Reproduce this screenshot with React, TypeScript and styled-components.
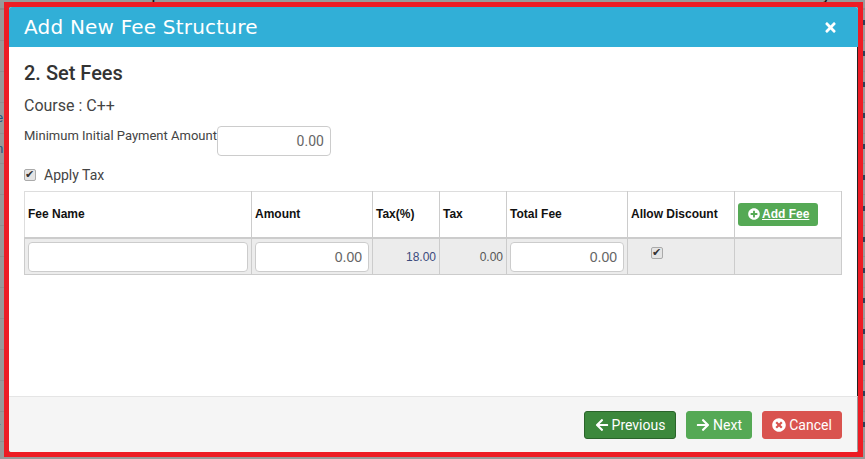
import React from "react";
import styled, { createGlobalStyle } from "styled-components";
import { FaArrowLeft, FaArrowRight, FaPlusCircle, FaTimes, FaTimesCircle } from "react-icons/fa";

const GlobalStyle = createGlobalStyle`
    html, body {
        margin: 0;
        padding: 0;
        width: 865px;
        height: 459px;
        overflow: hidden;
        background: #999;
        font-family: Roboto, "Liberation Sans", sans-serif;
    }
    * {
        box-sizing: border-box;
    }
`;

const Page = styled.div`
    position: relative;
    width: 865px;
    height: 459px;
    overflow: hidden;
`;

// the dimmed page that shows round the modal
const BackHead = styled.div`
    height: 21px;
    margin-top: -11px;
    display: flex;
    font-family: "Liberation Sans", sans-serif;
    font-size: 12px;
    font-weight: 700;
    line-height: 14px;
    color: #111;
    border-bottom: 2px solid #8c8c8c;
`;

const BackLabel = styled.span<{ $left: number }>`
    margin-left: ${(props) => props.$left}px;
`;

const BackRow = styled.div`
    height: 30.9px;
    display: flex;
    align-items: center;
    justify-content: space-between;
    border-bottom: 1px solid #8f8f8f;
    font-family: "Liberation Sans", sans-serif;
    font-size: 13px;
    color: #1f5480;
`;

const BackText = styled.span`
    margin-left: -4px;
`;

const BackMark = styled.span`
    width: 2px;
    height: 5px;
    margin-bottom: 4px;
    background: #2d4258;
`;

const Frame = styled.div`
    position: absolute;
    top: 2px;
    left: 4px;
    width: 859px;
    height: 455px;
    border: 5px solid #ed1c24;
    background: #777;
`;

const Modal = styled.div`
    height: 100%;
    display: flex;
    flex-direction: column;
    background: #fff;
    border-radius: 3px;
    overflow: hidden;
`;

const Header = styled.div`
    height: 40px;
    flex: none;
    background: #31afd7;
    display: flex;
    align-items: center;
    justify-content: space-between;
    padding: 0 20px 0 15px;
    color: #fff;
`;

const HeaderTitle = styled.h4`
    margin: 0;
    font-family: "DejaVu Sans", sans-serif;
    font-size: 20px;
    font-weight: 400;
    letter-spacing: 0.2px;
`;

const Close = styled.span`
    display: flex;
    color: #fff;
    font-size: 15px;
`;

const Body = styled.div`
    flex: 1;
    padding: 14px 15px 0;
    color: #444;
    border-right: 1px solid #222;
`;

const StepTitle = styled.h3`
    margin: 0;
    font-size: 20px;
    font-weight: 500;
    line-height: 24px;
    color: #333;
`;

const Course = styled.div`
    margin-top: 11px;
    font-size: 16px;
    line-height: 20px;
`;

const MinRow = styled.div`
    display: flex;
    align-items: flex-start;
    margin-top: 10px;
    font-size: 13px;
    line-height: 20px;
`;

const MoneyInput = styled.input<{ $width: number }>`
    width: ${(props) => props.$width}px;
    height: 30px;
    padding: 0 6px;
    border: 1px solid #ccc;
    border-radius: 4px;
    background: #fff;
    text-align: right;
    color: #666;
    font-family: Roboto, sans-serif;
    font-size: 14px;
    outline: none;
`;

const TaxRow = styled.label`
    display: flex;
    align-items: center;
    gap: 8px;
    margin-top: 9px;
    font-size: 14px;
    line-height: 20px;
`;

const Check = styled.input`
    appearance: none;
    position: relative;
    width: 12px;
    height: 12px;
    margin: 0;
    border: 1px solid #aaa;
    border-radius: 2px;
    background: #e4e4e4;

    &::after {
        content: "✔";
        position: absolute;
        top: -1px;
        left: 0;
        font-family: "DejaVu Sans", sans-serif;
        font-size: 11px;
        line-height: 12px;
        color: #333;
    }
`;

const Table = styled.table`
    width: 818px;
    margin-top: 6px;
    border-collapse: collapse;
    table-layout: fixed;
    font-family: "Liberation Sans", Arial, sans-serif;
`;

const HeadCell = styled.th<{ $width: number }>`
    width: ${(props) => props.$width}px;
    height: 46px;
    padding: 0 3px;
    border: 1px solid #ddd;
    border-right-color: #ccc;
    border-bottom: 2px solid #ccc;
    text-align: left;
    font-size: 12px;
    font-weight: 700;
    color: #111;
`;

const Cell = styled.td<{ $color?: string }>`
    height: 37px;
    padding: 2px 3px 0;
    border: 1px solid #ccc;
    background: #ececec;
    text-align: right;
    font-size: 12px;
    color: ${(props) => props.$color ?? "#555"};

    input {
        font-family: "Liberation Sans", Arial, sans-serif;
    }
`;

const CheckCell = styled.td`
    height: 37px;
    padding: 6px 0 0 23px;
    border: 1px solid #ccc;
    background: #ececec;
    vertical-align: top;
`;

const AddFee = styled.a`
    display: inline-flex;
    align-items: center;
    gap: 2px;
    height: 23px;
    padding: 0 9px 0 10px;
    border-radius: 3px;
    background: #55a955;
    color: #fff;
    font-size: 12px;
    font-weight: 700;
    text-decoration: underline;
`;

const Footer = styled.div`
    height: 56px;
    flex: none;
    background: #f5f5f5;
    border-top: 1px solid #e5e5e5;
    border-right: 1px solid #999;
    display: flex;
    align-items: center;
    justify-content: flex-end;
    gap: 10px;
    padding: 0 15px 0 0;
`;

const Button = styled.button<{ $bg: string; $border: string; $width: number }>`
    display: inline-flex;
    align-items: center;
    justify-content: center;
    gap: 3px;
    width: ${(props) => props.$width}px;
    height: 28px;
    padding: 0;
    background: ${(props) => props.$bg};
    border: 1px solid ${(props) => props.$border};
    border-radius: 3px;
    color: #fff;
    font-family: Roboto, sans-serif;
    font-size: 14px;
`;

const rowTexts: Record<number, string> = { 3: "e", 4: "n", 12: ":", 13: "r" };
const rows = Array.from({ length: 14 }, (_, i) => i);

const App = () => {
    return (
        <>
            <GlobalStyle />
            <Page>
                <BackHead>
                    <BackLabel $left={115}>Description</BackLabel>
                    <BackLabel $left={320}>Module</BackLabel>
                    <BackLabel $left={155}>Amount</BackLabel>
                    <BackLabel $left={50}>Bdaily</BackLabel>
                </BackHead>
                {rows.map((i) => (
                    <BackRow key={i}>
                        <BackText>{rowTexts[i] ?? ""}</BackText>
                        <BackMark />
                    </BackRow>
                ))}
                <Frame>
                    <Modal>
                        <Header>
                            <HeaderTitle>Add New Fee Structure</HeaderTitle>
                            <Close><FaTimes /></Close>
                        </Header>
                        <Body>
                            <StepTitle>2. Set Fees</StepTitle>
                            <Course>Course : C++</Course>
                            <MinRow>
                                Minimum Initial Payment Amount
                                <MoneyInput $width={114} defaultValue="0.00" />
                            </MinRow>
                            <TaxRow>
                                <Check type="checkbox" defaultChecked />
                                Apply Tax
                            </TaxRow>
                            <Table>
                                <thead>
                                    <tr>
                                        <HeadCell $width={227}>Fee Name</HeadCell>
                                        <HeadCell $width={121}>Amount</HeadCell>
                                        <HeadCell $width={67}>Tax(%)</HeadCell>
                                        <HeadCell $width={67}>Tax</HeadCell>
                                        <HeadCell $width={121}>Total Fee</HeadCell>
                                        <HeadCell $width={107}>Allow Discount</HeadCell>
                                        <HeadCell $width={107}>
                                            <AddFee><FaPlusCircle size={12} />Add Fee</AddFee>
                                        </HeadCell>
                                    </tr>
                                </thead>
                                <tbody>
                                    <tr>
                                        <Cell><MoneyInput $width={220} /></Cell>
                                        <Cell><MoneyInput $width={114} defaultValue="0.00" /></Cell>
                                        <Cell $color="#3b4a7c">18.00</Cell>
                                        <Cell>0.00</Cell>
                                        <Cell><MoneyInput $width={114} defaultValue="0.00" /></Cell>
                                        <CheckCell><Check type="checkbox" defaultChecked /></CheckCell>
                                        <Cell />
                                    </tr>
                                </tbody>
                            </Table>
                        </Body>
                        <Footer>
                            <Button $bg="#3c883c" $border="#2a632a" $width={92}><FaArrowLeft size={14} />Previous</Button>
                            <Button $bg="#55a955" $border="#55a955" $width={66}><FaArrowRight size={14} />Next</Button>
                            <Button $bg="#d9534f" $border="#d9534f" $width={80}><FaTimesCircle size={14} />Cancel</Button>
                        </Footer>
                    </Modal>
                </Frame>
            </Page>
        </>
    );
};

export default App;
